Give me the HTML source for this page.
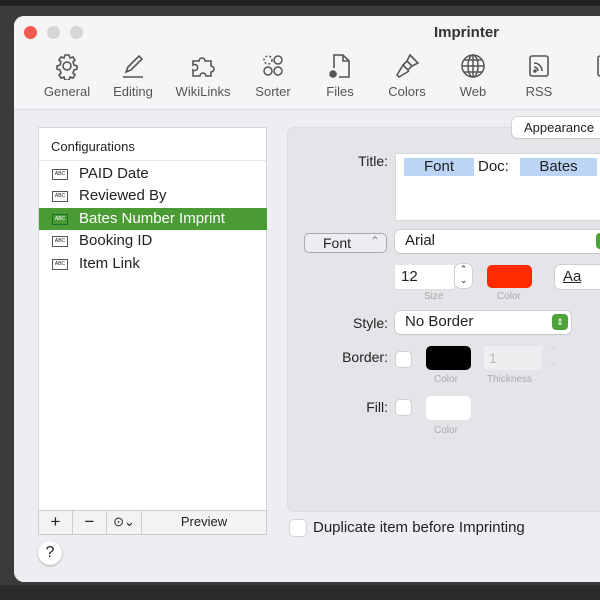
<!DOCTYPE html><html><head><style>
*{margin:0;padding:0;box-sizing:border-box}
body{width:600px;height:600px;overflow:hidden;background:#3b3b3b;font-family:"Liberation Sans",sans-serif;position:relative;color:#222}
.bgl{position:absolute;background:#111}
.win{position:absolute;left:14px;top:16px;width:620px;height:566px;background:#eceef1;border-radius:10px;overflow:hidden}
.tb{position:absolute;left:0;top:0;width:100%;height:94px;background:#f4f5f7;border-bottom:1px solid #dcdde0}
.dot{position:absolute;top:10px;width:13px;height:13px;border-radius:50%;background:#d6d6d8}
.title{position:absolute;left:420px;top:8px;font-weight:bold;font-size:15px;color:#333}
.it{position:absolute;top:36px;width:70px;text-align:center;font-size:13px;color:#555}
.it svg{display:block;margin:0 auto 4px;width:28px;height:28px}
.a{position:absolute}
.lbl{position:absolute;font-size:14px;color:#222;text-align:right}
.cap{position:absolute;font-size:10px;color:#aaa}
.row{position:absolute;left:0;width:228px;height:22px;font-size:15px;line-height:22px;padding-left:40px}
.abc{position:absolute;left:13px;top:6px;width:16px;height:11px;border:1px solid #555;font-size:5px;line-height:9px;text-align:center}
.pop{position:absolute;background:#fff;border-radius:5px;box-shadow:0 0 0 .5px #bbb,0 1px 1px #ccc;font-size:15px;padding-left:10px}
.gr{position:absolute;right:3px;top:3px;width:16px;height:16px;background:#4da33a;border-radius:4px;color:#fff;font-size:9px;text-align:center;line-height:16px}
.cb{position:absolute;width:15px;height:15px;background:#fff;border-radius:3px;box-shadow:0 0 0 .5px #bbb}
</style></head><body>
<div class="bgl" style="left:0;top:0;width:600px;height:6px;background:#222"></div>
<div class="bgl" style="left:0;top:585px;width:600px;height:15px;background:#2a2a2a"></div>
<div class="win">
<div class="tb">
<div class="dot" style="left:10px;background:#f25a52"></div><div class="dot" style="left:33px"></div><div class="dot" style="left:56px"></div>
<div class="title">Imprinter</div>
<div class="it" style="left:18px"><svg viewBox="0 0 28 28" fill="none" stroke="#555" stroke-width="1.6"><circle cx="14" cy="14" r="4"/><path d="M12 3h4l1 3 3-1 2 3-2 2 1 3 3 1v3l-3 1-1 3 2 2-2 3-3-1-1 3h-4l-1-3-3 1-2-3 2-2-1-3-3-1v-3l3-1 1-3-2-2 2-3 3 1z"/></svg>General</div>
<div class="it" style="left:84px"><svg viewBox="0 0 28 28" fill="none" stroke="#555" stroke-width="1.6"><path d="M7 20l2-5 11-11 3 3-11 11zM4 25h20"/></svg>Editing</div>
<div class="it" style="left:154px"><svg viewBox="0 0 28 28" fill="none" stroke="#555" stroke-width="1.6"><path d="M4 9h6a3 3 0 116 0h6v5a3 3 0 110 6v4h-5a3 3 0 10-6 0H4v-6a3 3 0 100-5z"/></svg>WikiLinks</div>
<div class="it" style="left:224px"><svg viewBox="0 0 28 28" fill="none" stroke="#555" stroke-width="1.5"><circle cx="9" cy="8" r="4" stroke-dasharray="2 2"/><circle cx="19" cy="8" r="4"/><circle cx="9" cy="19" r="4"/><circle cx="19" cy="19" r="4"/></svg>Sorter</div>
<div class="it" style="left:291px"><svg viewBox="0 0 28 28" fill="none" stroke="#555" stroke-width="1.6"><path d="M8 16V3h9l6 6v16H13M17 3v6h6"/><circle cx="7" cy="22" r="3" fill="#555"/></svg>Files</div>
<div class="it" style="left:358px"><svg viewBox="0 0 28 28" fill="none" stroke="#555" stroke-width="1.6"><path d="M17 3l8 8-6 3-5-5zM14 9l5 5-4 4-5-5zM10 13l-6 10 2 2 10-6"/></svg>Colors</div>
<div class="it" style="left:424px"><svg viewBox="0 0 28 28" fill="none" stroke="#555" stroke-width="1.5"><circle cx="14" cy="14" r="11"/><ellipse cx="14" cy="14" rx="5" ry="11"/><path d="M3 14h22M5 8h18M5 20h18M14 3v22"/></svg>Web</div>
<div class="it" style="left:490px"><svg viewBox="0 0 28 28" fill="none" stroke="#555" stroke-width="1.6"><rect x="5" y="4" width="18" height="20" rx="2"/><path d="M9 11a8 8 0 018 8M9 15a4 4 0 014 4"/><circle cx="10" cy="19" r="1" fill="#555"/></svg>RSS</div>
<div class="it" style="left:557px"><svg viewBox="0 0 28 28" fill="none" stroke="#555" stroke-width="1.6"><rect x="6" y="4" width="16" height="20" rx="2"/></svg>D</div>
</div>
<!-- list -->
<div class="a" style="left:24px;top:111px;width:229px;height:408px;background:#fff;border:1px solid #d4d6d9">
<div style="height:33px;border-bottom:1px solid #e6e6e6;font-size:13px;padding:11px 0 0 12px">Configurations</div>
<div class="row" style="top:35px"><div class="abc">ABC</div>PAID Date</div>
<div class="row" style="top:57px"><div class="abc">ABC</div>Reviewed By</div>
<div class="row" style="top:80px;background:#4b9b35;color:#fff"><div class="abc" style="border-color:#173">ABC</div>Bates Number Imprint</div>
<div class="row" style="top:102px"><div class="abc">ABC</div>Booking ID</div>
<div class="row" style="top:125px"><div class="abc">ABC</div>Item Link</div>
</div>
<div class="a" style="left:24px;top:494px;width:229px;height:25px;background:#f3f3f3;border:1px solid #ccc;font-size:13px;display:flex">
<div style="width:34px;border-right:1px solid #ccc;text-align:center;font-size:17px;line-height:22px">+</div>
<div style="width:34px;border-right:1px solid #ccc;text-align:center;font-size:17px;line-height:22px">−</div>
<div style="width:35px;border-right:1px solid #ccc;text-align:center;line-height:22px">⊙⌄</div>
<div style="flex:1;text-align:center;line-height:22px">Preview</div></div>
<div class="a" style="left:24px;top:525px;width:24px;height:24px;border-radius:50%;background:#fff;box-shadow:0 1px 2px #aaa;text-align:center;font-size:16px;line-height:24px">?</div>
<!-- group -->
<div class="a" style="left:273px;top:111px;width:360px;height:385px;background:#e3e5e8;border-radius:7px;border:1px solid #dcdee1"></div>
<div class="a" style="left:498px;top:101px;width:110px;height:21px;background:#fff;border-radius:5px;box-shadow:0 0 0 .5px #bbb,0 1px 1px #ccc;font-size:13px;padding:3px 0 0 12px">Appearance</div>
<div class="lbl" style="left:300px;top:137px;width:74px">Title:</div>
<div class="a" style="left:381px;top:137px;width:230px;height:68px;background:#fff;border:1px solid #d9d9d9;font-size:15px">
<span class="a" style="left:8px;top:4px;width:70px;height:18px;background:#bcd4f5;text-align:center">Font</span>
<span class="a" style="left:82px;top:4px">Doc:</span>
<span class="a" style="left:124px;top:4px;width:77px;height:18px;background:#bcd4f5;text-align:center">Bates</span></div>
<div class="a" style="left:290px;top:217px;width:83px;height:20px;background:#eceef1;border:1px solid #aaa;border-radius:5px;font-size:14px;padding:1px 0 0 18px">Font <span style="position:absolute;right:6px;top:0;color:#888;font-size:12px">⌃</span></div>
<div class="pop" style="left:381px;top:214px;width:220px;height:23px;line-height:22px">Arial<div class="gr">⇕</div></div>
<div class="a" style="left:381px;top:249px;width:59px;height:25px;background:#fff;border-bottom:1px solid #ddd;font-size:15px;padding:3px 0 0 6px">12</div>
<div class="a" style="left:441px;top:248px;width:17px;height:24px;background:#fff;border-radius:5px;box-shadow:0 0 0 .5px #bbb;font-size:9px;text-align:center;line-height:11px">⌃<br>⌄</div>
<div class="a" style="left:473px;top:249px;width:45px;height:23px;background:#ff2a00;border-radius:5px"></div>
<div class="a" style="left:541px;top:249px;width:60px;height:24px;background:#fff;border-radius:5px;box-shadow:0 0 0 .5px #bbb;font-size:15px;padding:3px 0 0 8px;text-decoration:underline">Aa</div>
<div class="cap" style="left:410px;top:275px">Size</div>
<div class="cap" style="left:483px;top:275px">Color</div>
<div class="lbl" style="left:300px;top:299px;width:74px">Style:</div>
<div class="pop" style="left:381px;top:295px;width:176px;height:23px;line-height:22px">No Border<div class="gr">⇕</div></div>
<div class="lbl" style="left:300px;top:333px;width:74px">Border:</div>
<div class="cb" style="left:382px;top:336px"></div>
<div class="a" style="left:412px;top:330px;width:45px;height:24px;background:#000;border-radius:5px"></div>
<div class="a" style="left:470px;top:330px;width:58px;height:24px;background:#eceef0;font-size:14px;color:#bbb;padding:4px 0 0 5px">1</div>
<div class="a" style="left:532px;top:330px;width:14px;height:24px;color:#ccc;font-size:9px;text-align:center;line-height:11px">⌃<br>⌄</div>
<div class="cap" style="left:420px;top:358px">Color</div>
<div class="cap" style="left:473px;top:358px">Thickness</div>
<div class="lbl" style="left:300px;top:383px;width:74px">Fill:</div>
<div class="cb" style="left:382px;top:384px"></div>
<div class="a" style="left:412px;top:380px;width:45px;height:24px;background:#fff;border-radius:5px"></div>
<div class="cap" style="left:420px;top:409px">Color</div>
<div class="cb" style="left:276px;top:504px;width:16px;height:16px"></div>
<div class="a" style="left:299px;top:503px;font-size:15px">Duplicate item before Imprinting</div>
</div>
</body></html>
